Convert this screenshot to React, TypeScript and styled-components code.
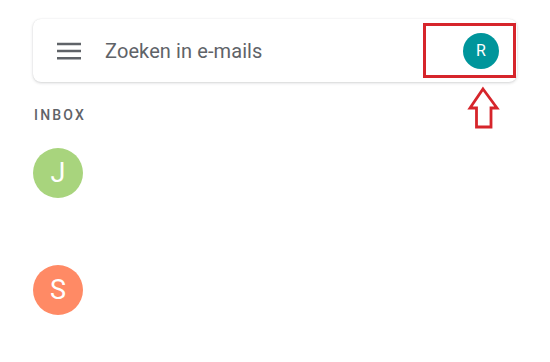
import styled, { createGlobalStyle } from "styled-components";

const GlobalStyle = createGlobalStyle`
  html, body {
    margin: 0;
    padding: 0;
    background: #ffffff;
    font-family: Roboto, "Noto Sans", Arial, sans-serif;
  }
`;

const Page = styled.div`
  position: relative;
  width: 550px;
  height: 362px;
  padding: 19px 33px 0 33px;
  box-sizing: border-box;
  overflow: hidden;
`;

const SearchBar = styled.div`
  position: relative;
  display: flex;
  align-items: center;
  height: 63px;
  padding: 0 18px 0 22px;
  gap: 24px;
  border-radius: 8px;
  background: #fff;
  box-shadow: 0 1px 3px rgba(60, 64, 67, 0.22), 0 0 1px rgba(60, 64, 67, 0.12);
`;

const Placeholder = styled.span`
  flex: 1;
  font-size: 20px;
  color: #5f6368;
  letter-spacing: 0.1px;
`;

const Avatar = styled.div<{ $bg: string; $size: number; $font: number }>`
  width: ${(p) => p.$size}px;
  height: ${(p) => p.$size}px;
  border-radius: 50%;
  background: ${(p) => p.$bg};
  color: #fff;
  display: flex;
  align-items: center;
  justify-content: center;
  font-size: ${(p) => p.$font}px;
  flex-shrink: 0;
`;

const Highlight = styled.div`
  position: absolute;
  left: 390px;
  top: 4px;
  width: 93px;
  height: 55px;
  border: 3px solid #d6252b;
  box-sizing: border-box;
`;

const Arrow = styled.svg`
  position: absolute;
  left: 466px;
  top: 85px;
`;

const SectionLabel = styled.div`
  margin: 25px 0 0 1px;
  font-size: 14px;
  font-weight: 500;
  letter-spacing: 2.2px;
  color: #5f6368;
`;

const List = styled.div`
  display: flex;
  flex-direction: column;
  gap: 67px;
  margin-top: 25px;
`;

const Row = styled.div`
  display: flex;
  align-items: center;
  height: 50px;
`;

const MenuIcon = () => (
  <svg width="26" height="24" viewBox="0 0 26 24">
    <path
      d="M2 6.8h24v2.4H2zM2 13.8h24v2.4H2zM2 21h24v2.4H2z"
      fill="#5f6368"
      transform="translate(0 -3)"
    />
  </svg>
);

export default function App() {
  return (
    <>
      <GlobalStyle />
      <Page>
        <SearchBar>
          <MenuIcon />
          <Placeholder>Zoeken in e-mails</Placeholder>
          <Avatar $bg="#00959b" $size={36} $font={16}>
            R
          </Avatar>
          <Highlight />
        </SearchBar>
        <Arrow width="36" height="46" viewBox="0 0 36 46">
          <path
            d="M17 4 L31 23 L25 23 L25 42 L10.5 42 L10.5 23 L4 23 Z"
            fill="none"
            stroke="#d6252b"
            strokeWidth="2.8"
            strokeLinejoin="miter"
          />
        </Arrow>
        <SectionLabel>INBOX</SectionLabel>
        <List>
          <Row>
            <Avatar $bg="#a8d47d" $size={50} $font={27}>
              J
            </Avatar>
          </Row>
          <Row>
            <Avatar $bg="#ff8a65" $size={50} $font={27}>
              S
            </Avatar>
          </Row>
        </List>
      </Page>
    </>
  );
}
